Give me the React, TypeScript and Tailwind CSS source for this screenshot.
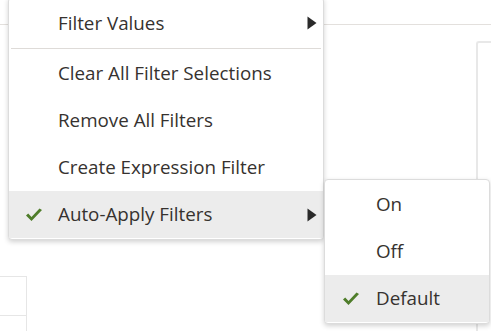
const font = { fontFamily: '"Open Sans", "Noto Sans", sans-serif' };

function Check() {
  return (
    <svg width="18" height="14" viewBox="0 0 18 14">
      <path d="M1 7.5 L6.5 13 L17 2 L14.5 0.5 L6.5 9 L3.2 5.5 Z" fill="#4f7d2a" />
    </svg>
  );
}

function Caret() {
  return (
    <svg width="10" height="14" viewBox="0 0 10 14">
      <path d="M0.5 0.5 L9.5 7 L0.5 13.5 Z" fill="#2a2a2a" />
    </svg>
  );
}

function Item({ label, checked, sub, active, indent = 58 }: { label: string; checked?: boolean; sub?: boolean; active?: boolean; indent?: number }) {
  return (
    <div className={`relative flex items-center h-[47px] pr-[6px] ${active ? "bg-[#ececec]" : ""}`}>
      <div className="flex justify-center shrink-0" style={{ width: indent }}>
        {checked && <Check />}
      </div>
      <span className="flex-1 text-[18.8px] text-[#36322f] leading-none">{label}</span>
      {sub && <Caret />}
    </div>
  );
}

export default function App() {
  return (
    <div className="relative w-[491px] h-[331px] bg-white overflow-hidden" style={font}>
      {/* background page */}
      <div className="h-[25px] border-b border-[#e3e0dd]" />
      <div className="flex h-[306px]">
        <div className="flex flex-col flex-1">
          <div className="h-[251px]" />
          <div className="w-[27px] h-[40px] border-t border-r border-b border-[#e6e6e6]" />
          <div className="w-[27px] flex-1 border-r border-[#e6e6e6]" />
        </div>
        <div className="w-[15px] mt-[16px] border-l-2 border-t-2 border-[#e8e8e8] rounded-tl-[3px]" />
      </div>

      {/* main menu */}
      <div className="absolute left-[8px] top-[-3px] w-[316px] bg-white border border-[#dcdcdc] rounded-[4px] shadow-[0_2px_5px_rgba(0,0,0,0.18)] pt-[3px] pb-[1px]">
        <div className="flex items-center h-[47px] pr-[6px] pb-[3px]">
          <div className="w-[49px] shrink-0" />
          <span className="flex-1 text-[18.8px] text-[#36322f] leading-none">Filter Values</span>
          <Caret />
        </div>
        <div className="mx-[2px] h-px bg-[#dedbd8]" />
        <div className="h-[1px]" />
        <Item indent={49} label="Clear All Filter Selections" />
        <Item indent={49} label="Remove All Filters" />
        <Item indent={49} label="Create Expression Filter" />
        <Item indent={49} label="Auto-Apply Filters" checked sub active />
      </div>

      {/* submenu */}
      <div className="absolute left-[324px] top-[179px] w-[166px] bg-white border border-[#dcdcdc] rounded-[4px] shadow-[0_2px_5px_rgba(0,0,0,0.18)] pt-px pb-px">
        <Item indent={51} label="On" />
        <Item indent={51} label="Off" />
        <Item indent={51} label="Default" checked active />
      </div>
    </div>
  );
}
